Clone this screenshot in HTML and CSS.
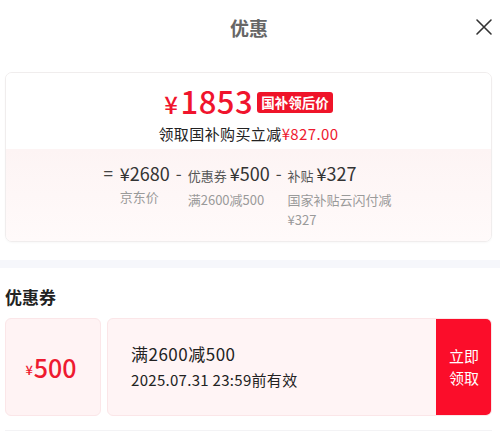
FILE: index.html
```html
<!DOCTYPE html>
<html lang="zh">
<head>
<meta charset="utf-8">
<link rel="stylesheet" href="styles.css">
</head>
<body>
<div class="page">
  <div class="header">
    <div class="title">优惠</div>
    <svg class="close" width="18" height="18" viewBox="0 0 18 18"><path d="M2 2L16 16M16 2L2 16" stroke="#333" stroke-width="1.6" fill="none" stroke-linecap="round"/></svg>
  </div>

  <div class="card">
    <div class="card-top">
      <div class="price-line">
        <span class="price"><span class="yen">¥</span>1853</span>
        <span class="badge">国补领后价</span>
      </div>
      <div class="save">领取国补购买立减<span class="red">¥827.00</span></div>
    </div>
    <div class="card-bottom">
      <div class="calc">
        <span class="op">=</span>
        <div class="col">
          <div class="amt">¥2680</div>
          <div class="desc">京东价</div>
        </div>
        <span class="op">-</span>
        <div class="col">
          <div class="amt"><span class="lbl">优惠券</span>¥500</div>
          <div class="desc">满2600减500</div>
        </div>
        <span class="op">-</span>
        <div class="col col-wide">
          <div class="amt"><span class="lbl">补贴</span>¥327</div>
          <div class="desc">国家补贴云闪付减¥327</div>
        </div>
      </div>
    </div>
  </div>

  <div class="band"></div>

  <div class="section-title">优惠券</div>

  <div class="coupon">
    <div class="stub"><span class="cy">¥</span>500</div>
    <div class="body">
      <div class="info">
        <div class="cond">满2600减500</div>
        <div class="date">2025.07.31 23:59前有效</div>
      </div>
      <div class="btn">立即<br>领取</div>
    </div>
  </div>
  <div class="rule"></div>
</div>
</body>
</html>
```
FILE: styles.css
```css
* { box-sizing: border-box; }
html, body { margin: 0; padding: 0; background: #fff; }
body {
  font-family: "Noto Sans CJK SC", "Noto Sans", sans-serif;
  color: #333;
  width: 500px;
  height: 436px;
  overflow: hidden;
}
.page { padding: 0 8px 0 5px; }

.header {
  position: relative;
  height: 55px;
  display: flex;
  align-items: center;
  justify-content: center;
}
.title {
  font-size: 19px;
  font-weight: 700;
  color: #666;
  margin-left: 1px;
}
.close {
  position: absolute;
  right: -1px;
  top: 18px;
}

.card {
  margin-top: 17px;
  border: 1px solid #f0eded;
  border-radius: 7px;
  overflow: hidden;
  height: 170px;
  box-shadow: 0 1px 2px rgba(0,0,0,0.03);
}
.card-top {
  height: 76px;
  background: #fff;
  display: flex;
  flex-direction: column;
  align-items: center;
  padding-top: 12px;
}
.price-line {
  display: flex;
  align-items: center;
  gap: 4px;
  height: 34px;
}
.price {
  color: #f0142d;
  font-size: 31px;
  font-weight: 500;
  line-height: 34px;
  letter-spacing: 0.5px;
}
.price .yen { font-size: 24px; margin-right: 2px; }
.badge {
  background: #ef1429;
  color: #fff;
  font-size: 13.5px;
  font-weight: 700;
  line-height: 21px;
  padding: 0 4px;
  border-radius: 3px;
  margin-top: 1px;
}
.save {
  font-size: 15px;
  line-height: 20px;
  margin-top: 5px;
  color: #222;
  letter-spacing: 0.4px;
}
.red { color: #ee1a30; }

.card-bottom {
  height: 92px;
  background: linear-gradient(180deg, #fdf4f4 0%, #fffafa 100%);
  display: flex;
  justify-content: center;
  padding-top: 13px;
  padding-left: 0;
}
.calc {
  display: flex;
  align-items: flex-start;
}
.op {
  font-size: 17px;
  line-height: 22px;
  color: #444;
  margin: 0 6px;
}
.op:first-child { margin-left: 0; margin-right: 7px; }
.col { display: flex; flex-direction: column; }
.amt {
  font-size: 18px;
  line-height: 22px;
  color: #333;
  white-space: nowrap;
}
.lbl { font-size: 13px; color: #555; margin-right: 3px; }
.desc {
  font-size: 13px;
  line-height: 20px;
  color: #9a9a9a;
  margin-top: 3px;
}
.col-wide { width: 106px; }
.col-wide .desc { word-break: break-all; }

.band {
  height: 8px;
  background: #f6f7fb;
  margin: 18px -8px 0 -5px;
}

.section-title {
  font-size: 17px;
  font-weight: 700;
  color: #222;
  line-height: 22px;
  margin-top: 18px;
}

.coupon {
  display: flex;
  gap: 6px;
  margin-top: 10px;
  height: 98px;
}
.stub {
  width: 96px;
  background: #fff3f4;
  border: 1px solid #fbe6e8;
  border-radius: 6px;
  display: flex;
  align-items: center;
  justify-content: center;
  color: #ee1a30;
  font-size: 25px;
  font-weight: 500;
  padding-right: 4px;
}
.stub .cy { font-size: 13px; margin-top: 5px; margin-right: 1px; }
.body {
  flex: 1;
  display: flex;
  background: #fff4f5;
  border: 1px solid #fbe6e8;
  border-radius: 6px;
  overflow: hidden;
}
.info {
  flex: 1;
  display: flex;
  flex-direction: column;
  justify-content: center;
  padding-left: 23px;
  padding-bottom: 2px;
}
.cond { font-size: 17px; line-height: 24px; color: #222; letter-spacing: 0.5px; }
.date { font-size: 15px; line-height: 22px; color: #222; margin-top: 3px; letter-spacing: 0.3px; }
.btn {
  width: 56px;
  background: #fb0d2a;
  color: #fff;
  font-size: 15px;
  line-height: 22px;
  display: flex;
  align-items: center;
  justify-content: center;
  text-align: center;
  margin: -1px -1px -1px 0;
}

.rule {
  height: 1px;
  background: #f3f3f5;
  margin-top: 14px;
}
```
